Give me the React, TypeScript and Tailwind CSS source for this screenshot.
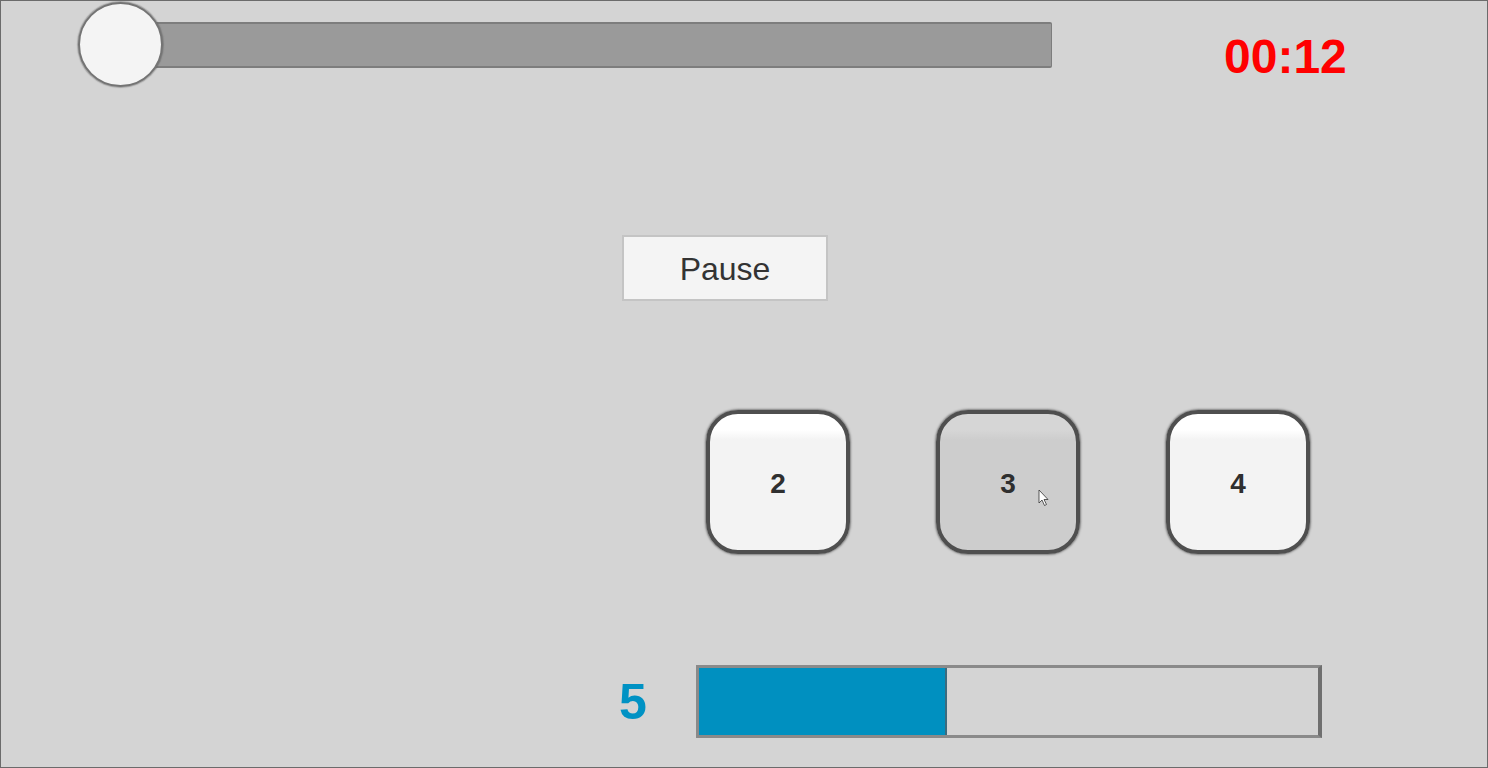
import React from "react";

function NumBtn({ n, hover }: { n: string; hover?: boolean }) {
  return (
    <div
      className={
        "relative w-[144px] h-[144px] rounded-[32px] border-[4px] border-[#4f4f4f] shadow-[0_0_2px_1px_rgba(70,70,70,0.6)] flex items-center justify-center text-[28px] font-bold text-[#2f2f2f] " +
        (hover
          ? "bg-[linear-gradient(#d6d6d6_0px,#d6d6d6_16px,#cdcdcd_26px,#cdcdcd_100%)]"
          : "bg-[linear-gradient(#ffffff_0px,#ffffff_16px,#f3f3f3_26px,#f3f3f3_100%)]")
      }
    >
      <span className="leading-none mt-[3px]">{n}</span>
      {hover && (
        <svg
          className="absolute left-[98px] top-[75px]"
          width="12"
          height="18"
          viewBox="0 0 12 18"
        >
          <path d="M1 1 L1 14 L4 11 L6.5 16.5 L8.5 15.5 L6 10.5 L10 10.5 Z" fill="#fff" stroke="#333" strokeWidth="0.8" />
        </svg>
      )}
    </div>
  );
}

export default function App() {
  return (
    <div
      className="w-[1488px] h-[768px] bg-[#d4d4d4] border border-[#6b6b6b] flex flex-col overflow-hidden"
      style={{ fontFamily: '"Liberation Sans", Arial, sans-serif' }}
    >
      {/* top row */}
      <div className="h-[88px] flex items-start shrink-0">
        <div className="relative ml-[77px] mt-[1px] w-[974px] h-[85px]">
          <div className="ml-[42px] mt-[20px] h-[46px] w-[932px] bg-[#9a9a9a] border-t-[2px] border-b-[2px] border-r border-[#7d7d7d] rounded-r-[2px]" />
          <div className="absolute left-0 top-0 w-[85px] h-[85px] rounded-full bg-[#f4f4f4] border-[2px] border-[#747474] shadow-[0_0_1px_1px_rgba(90,90,90,0.4)]" />
        </div>
        <div className="ml-[172px] mt-[32px] text-[48px] leading-none font-bold text-[#ff0000]">
          00:12
        </div>
      </div>

      {/* pause */}
      <div className="ml-[621px] mt-[146px] w-[206px] h-[66px] bg-[#f4f4f4] border-[2px] border-[#c4c4c4] shrink-0 flex items-center justify-center text-[32px] text-[#333] leading-none">
        <span className="mt-[2px]">Pause</span>
      </div>

      {/* number buttons */}
      <div className="ml-[705px] mt-[109px] flex gap-[86px] shrink-0">
        <NumBtn n="2" />
        <NumBtn n="3" hover />
        <NumBtn n="4" />
      </div>

      {/* bottom row */}
      <div className="ml-[618px] mt-[111px] flex items-center shrink-0">
        <div className="w-[77px] text-[50px] leading-none font-bold text-[#0092c4]">5</div>
        <div className="w-[626px] h-[73px] border-[3px] border-[#8a8a8a] border-r-[#6f6f6f] border-r-[4px] bg-[#d4d4d4] flex">
          <div className="w-[248px] h-full bg-[#0090c0] border-r-[2px] border-[#3c6b7e]" />
        </div>
      </div>
    </div>
  );
}
